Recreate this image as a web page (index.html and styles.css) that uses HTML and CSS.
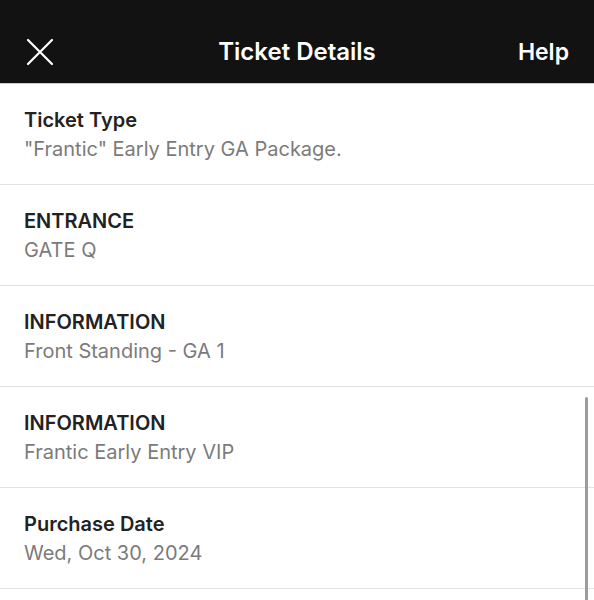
FILE: index.html
```html
<!DOCTYPE html>
<html lang="en">
<head>
    <meta charset="UTF-8">
    <meta name="viewport" content="width=device-width, initial-scale=1.0">
    <title>Ticket Details</title>
    <link rel="stylesheet" href="styles.css">
</head>
<body>
    <div class="screen">
        <header class="topbar">
            <button class="close-btn" aria-label="Close">
                <svg width="28" height="28" viewBox="0 0 28 28">
                    <path d="M2 2 L26 26 M26 2 L2 26" stroke="#fff" stroke-width="2.2" stroke-linecap="round" fill="none"/>
                </svg>
            </button>
            <h1 class="topbar-title">Ticket Details</h1>
            <a href="#" class="help-link">Help</a>
        </header>
        <ul class="details">
            <li class="detail-row">
                <div class="detail-label">Ticket Type</div>
                <div class="detail-value">"Frantic" Early Entry GA Package.</div>
            </li>
            <li class="detail-row">
                <div class="detail-label">ENTRANCE</div>
                <div class="detail-value">GATE Q</div>
            </li>
            <li class="detail-row">
                <div class="detail-label">INFORMATION</div>
                <div class="detail-value">Front Standing - GA 1</div>
            </li>
            <li class="detail-row">
                <div class="detail-label">INFORMATION</div>
                <div class="detail-value">Frantic Early Entry VIP</div>
            </li>
            <li class="detail-row">
                <div class="detail-label">Purchase Date</div>
                <div class="detail-value">Wed, Oct 30, 2024</div>
            </li>
        </ul>
        <div class="scrollbar"></div>
    </div>
</body>
</html>
```

FILE: styles.css
```css
html, body {
    margin: 0;
    padding: 0;
    height: 100%;
    overflow: hidden;
}
body {
    font-family: Inter, "Noto Sans", Arial, sans-serif;
    background-color: #fff;
}
.screen {
    position: relative;
    height: 600px;
    overflow: hidden;
}
.topbar {
    height: 62px;
    padding: 21px 25px 0 26px;
    background-color: #121212;
    border-bottom: 1px solid #c8c8c8;
    display: flex;
    align-items: center;
    justify-content: space-between;
    position: relative;
}
.close-btn {
    background: none;
    border: none;
    padding: 0;
    width: 28px;
    height: 28px;
    display: flex;
}
.topbar-title {
    position: absolute;
    left: 0;
    right: 0;
    top: 21px;
    height: 62px;
    line-height: 62px;
    margin: 0;
    text-align: center;
    color: #fff;
    font-size: 24px;
    font-weight: 600;
    pointer-events: none;
}
.help-link {
    color: #fff;
    text-decoration: none;
    font-size: 23px;
    font-weight: 600;
}
.details {
    list-style: none;
    margin: 0;
    padding: 0;
}
.detail-row {
    padding: 22px 24px 20px;
    border-bottom: 1px solid #e2e2e2;
}
.detail-label {
    font-size: 20px;
    font-weight: 600;
    line-height: 29px;
    color: #222;
}
.detail-value {
    font-size: 20px;
    line-height: 29px;
    color: #7b7b7b;
}
.scrollbar {
    position: absolute;
    right: 6px;
    top: 397px;
    width: 3px;
    height: 220px;
    border-radius: 2px;
    background-color: #9c9c9c;
}
```
